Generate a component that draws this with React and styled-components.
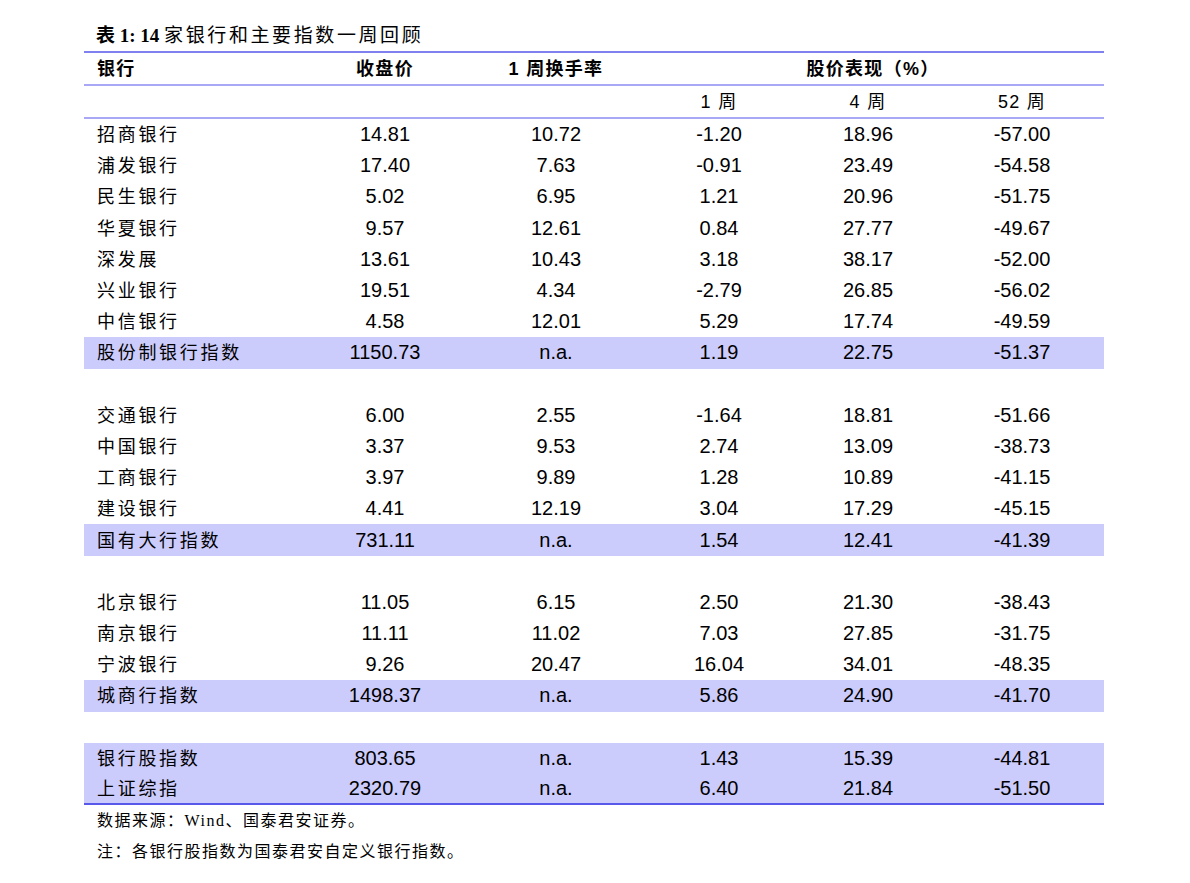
import React from 'react';
import styled, { createGlobalStyle } from 'styled-components';

// data for the weekly review table

const groups = [
    {
        rows: [
            ['招商银行', '14.81', '10.72', '-1.20', '18.96', '-57.00'],
            ['浦发银行', '17.40', '7.63', '-0.91', '23.49', '-54.58'],
            ['民生银行', '5.02', '6.95', '1.21', '20.96', '-51.75'],
            ['华夏银行', '9.57', '12.61', '0.84', '27.77', '-49.67'],
            ['深发展', '13.61', '10.43', '3.18', '38.17', '-52.00'],
            ['兴业银行', '19.51', '4.34', '-2.79', '26.85', '-56.02'],
            ['中信银行', '4.58', '12.01', '5.29', '17.74', '-49.59'],
        ],
        index: [['股份制银行指数', '1150.73', 'n.a.', '1.19', '22.75', '-51.37']],
    },
    {
        rows: [
            ['交通银行', '6.00', '2.55', '-1.64', '18.81', '-51.66'],
            ['中国银行', '3.37', '9.53', '2.74', '13.09', '-38.73'],
            ['工商银行', '3.97', '9.89', '1.28', '10.89', '-41.15'],
            ['建设银行', '4.41', '12.19', '3.04', '17.29', '-45.15'],
        ],
        index: [['国有大行指数', '731.11', 'n.a.', '1.54', '12.41', '-41.39']],
    },
    {
        rows: [
            ['北京银行', '11.05', '6.15', '2.50', '21.30', '-38.43'],
            ['南京银行', '11.11', '11.02', '7.03', '27.85', '-31.75'],
            ['宁波银行', '9.26', '20.47', '16.04', '34.01', '-48.35'],
        ],
        index: [['城商行指数', '1498.37', 'n.a.', '5.86', '24.90', '-41.70']],
    },
    {
        rows: [],
        index: [
            ['银行股指数', '803.65', 'n.a.', '1.43', '15.39', '-44.81'],
            ['上证综指', '2320.79', 'n.a.', '6.40', '21.84', '-51.50'],
        ],
    },
]

const widths = [216, 170, 172, 154, 144, 164]

const Row = ({cells, shade}) => (
    <BodyRow $shade={shade}>
        {cells.map((c, i) => (
            <Cell key={i} $label={i === 0}>{c}</Cell>
        ))}
    </BodyRow>
)

const App = () => {
    return (
        <Page>
            <GlobalStyle />
            <Title>
                <TitleNum>表 1: 14 </TitleNum>家银行和主要指数一周回顾
            </Title>
            <Table>
                <colgroup>
                    {widths.map((w, i) => <Col key={i} $w={w} />)}
                </colgroup>
                <thead>
                    <HeadRow>
                        <HeadCell $label $bold>银行</HeadCell>
                        <HeadCell $bold>收盘价</HeadCell>
                        <HeadCell $bold>1 周换手率</HeadCell>
                        <HeadCell $bold colSpan={3}>股价表现（%）</HeadCell>
                    </HeadRow>
                    <HeadRow>
                        <HeadCell />
                        <HeadCell />
                        <HeadCell />
                        <HeadCell>1 周</HeadCell>
                        <HeadCell>4 周</HeadCell>
                        <HeadCell>52 周</HeadCell>
                    </HeadRow>
                </thead>
                <tbody>
                    {groups.map((g, gi) => (
                        <React.Fragment key={gi}>
                            {g.rows.map(r => <Row key={r[0]} cells={r} />)}
                            {g.index.map(r => <Row key={r[0]} cells={r} shade />)}
                            {gi < groups.length - 1 && (
                                <BodyRow><Cell colSpan={6} /></BodyRow>
                            )}
                        </React.Fragment>
                    ))}
                </tbody>
            </Table>
            <Note>数据来源：Wind、国泰君安证券。</Note>
            <Note>注：各银行股指数为国泰君安自定义银行指数。</Note>
        </Page>
    )
}

export default App;

//styling below this line

const GlobalStyle = createGlobalStyle`
    html, body {
        margin: 0;
        padding: 0;
        background: #ffffff;
    }
    body {
        font-family: "Liberation Sans", "Noto Sans CJK SC", sans-serif;
        color: #000000;
    }
`

const Page = styled.div`
    width: 1020px;
    padding: 24px 0 0 84px;
`

const Title = styled.h1`
    margin: 0 0 3px 12px;
    font-family: "Liberation Serif", "Noto Sans CJK SC", serif;
    font-size: 19px;
    line-height: 24px;
    font-weight: 400;
    letter-spacing: 2.6px;
`

    const TitleNum = styled.span`
        font-weight: 700;
        letter-spacing: 0;
    `

const Table = styled.table`
    width: 1020px;
    table-layout: fixed;
    border-collapse: separate;
    border-spacing: 0;
    border-top: 2px solid #8080f0;
`

    const Col = styled.col`
        width: ${p => p.$w}px;
    `

    const HeadRow = styled.tr`
        height: 33px;
    `

    const HeadCell = styled.th`
        padding: ${p => p.$label ? '0 0 3px 13px' : '0 0 3px 0'};
        text-align: ${p => p.$label ? 'left' : 'center'};
        border-bottom: 2px solid #a8a8f6;
        font-size: 18px;
        font-weight: ${p => p.$bold ? 700 : 400};
        letter-spacing: 1.3px;
        white-space: nowrap;
    `

    const BodyRow = styled.tr`
        height: 31.2px;
        background: ${p => p.$shade ? '#ccccfc' : 'transparent'};

        &:last-child td {
            border-bottom: 2px solid #5858ea;
        }
    `

    const Cell = styled.td`
        padding: ${p => p.$label ? '0 0 3px 13px' : '0'};
        text-align: ${p => p.$label ? 'left' : 'center'};
        font-size: ${p => p.$label ? '18px' : '20px'};
        letter-spacing: ${p => p.$label ? '2.7px' : '0'};
        white-space: nowrap;
    `

const Note = styled.p`
    margin: 0;
    padding-left: 13px;
    font-family: "Liberation Serif", "Noto Sans CJK SC", serif;
    font-size: 16px;
    line-height: 31px;
    letter-spacing: 1.5px;
`
